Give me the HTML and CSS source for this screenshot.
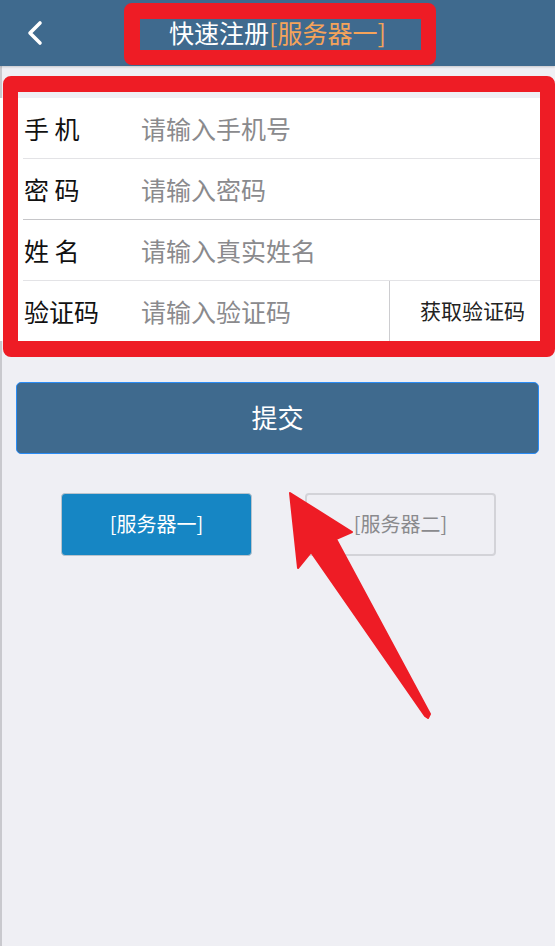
FILE: index.html
```html
<!DOCTYPE html>
<html lang="zh-CN">
<head>
<meta charset="utf-8">
<title>快速注册</title>
<link rel="stylesheet" href="styles.css">
</head>
<body>
<div class="page">
  <header class="topbar">
    <a class="back" href="#" aria-label="返回">
      <svg width="20" height="28" viewBox="0 0 20 28"><polyline points="15,4 5,14 15,24" fill="none" stroke="#fff" stroke-width="3.6" stroke-linecap="round" stroke-linejoin="round"/></svg>
    </a>
    <h1 class="title">快速注册<span class="server">[服务器一]</span></h1>
    <span class="spacer"></span>
  </header>

  <form class="form">
    <div class="row row-light">
      <label class="label">手 机</label>
      <input class="field" type="text" placeholder="请输入手机号">
    </div>
    <div class="row row-dark">
      <label class="label">密 码</label>
      <input class="field" type="password" placeholder="请输入密码">
    </div>
    <div class="row row-light">
      <label class="label">姓 名</label>
      <input class="field" type="text" placeholder="请输入真实姓名">
    </div>
    <div class="row row-last">
      <label class="label">验证码</label>
      <input class="field" type="text" placeholder="请输入验证码">
      <button type="button" class="code-btn">获取验证码</button>
    </div>
  </form>

  <button type="button" class="submit">提交</button>

  <div class="servers">
    <button type="button" class="srv srv-active">[服务器一]</button>
    <button type="button" class="srv srv-idle">[服务器二]</button>
  </div>

  <div class="mark mark-title"></div>
  <div class="mark mark-form"></div>
  <svg class="arrow" width="555" height="946" viewBox="0 0 555 946">
    <polygon points="290,493 352,532 336,539 430,714 428,718 425,716 311,552 298,568" fill="#ee1c25" stroke="#ee1c25" stroke-width="2" stroke-linejoin="round"/>
  </svg>
</div>
</body>
</html>
```
FILE: styles.css
```css
* { box-sizing: border-box; }
html, body { margin: 0; padding: 0; }
body {
  background: #efeff4;
  font-family: "Noto Sans CJK SC", "Noto Sans", sans-serif;
}
.page {
  position: relative;
  width: 555px;
  min-height: 946px;
  overflow: hidden;
  box-shadow: inset 2px 0 0 #c9c9ce;
}
.topbar {
  height: 66px;
  background: #3f6a8e;
  display: grid;
  grid-template-columns: 1fr auto 1fr;
  align-items: center;
  box-shadow: 0 1px 2px rgba(0,0,0,0.18);
}
.back {
  display: flex;
  align-items: center;
  padding-left: 25px;
  height: 66px;
}
.title {
  margin: 0;
  font-size: 25px;
  font-weight: normal;
  color: #fff;
  line-height: 1;
  padding-bottom: 2px;
}
.server { color: #f5a35a; }

.form {
  margin-top: 32px;
  background: #fff;
}
.row {
  margin-left: 23px;
  height: 61px;
  display: flex;
  align-items: center;
  border-bottom: 1px solid #e3e3e6;
}
.row-dark { border-bottom-color: #c6c6c9; }
.row-last { border-bottom: none; height: 60px; align-items: stretch; }
.label {
  width: 118px;
  flex: none;
  font-size: 25px;
  color: #111;
  padding-left: 1px;
  display: flex;
  align-items: center;
}
.field {
  flex: 1;
  min-width: 0;
  border: none;
  outline: none;
  background: transparent;
  font-family: inherit;
  font-size: 25px;
  color: #333;
  padding: 0;
}
.field::placeholder { color: #8a8a8d; }
.code-btn {
  width: 166px;
  flex: none;
  border: none;
  border-left: 1px solid #cdcdd0;
  background: #fff;
  font-family: inherit;
  font-size: 21px;
  color: #222;
  padding: 0 0 2px;
}

.submit {
  display: block;
  margin: 41px 16px 0;
  width: 523px;
  height: 72px;
  background: #3f6a8e;
  border: 1px solid #2a8cf5;
  border-radius: 5px;
  color: #fff;
  font-family: inherit;
  font-size: 26px;
  padding: 0 0 4px;
}

.servers {
  margin-top: 39px;
  display: flex;
  justify-content: center;
  gap: 53px;
  padding-left: 2px;
}
.srv {
  width: 191px;
  height: 63px;
  border-radius: 4px;
  font-family: inherit;
  font-size: 20px;
  padding: 0 0 2px;
}
.srv-active {
  background: #1686c4;
  border: 1px solid #b9c3cc;
  color: #fff;
}
.srv-idle {
  background: transparent;
  border: 2px solid #d3d3d8;
  color: #8a8a8d;
}

.mark {
  position: absolute;
  border: 16px solid #ee1c25;
  border-radius: 8px;
  pointer-events: none;
}
.mark-title {
  left: 124px;
  top: 3px;
  width: 312px;
  height: 62px;
  border-bottom-width: 15px;
  border-right-width: 15px;
}
.mark-form {
  left: 3px;
  top: 76px;
  width: 552px;
  height: 281px;
  border-left-width: 15px;
  border-right-width: 15px;
}
.arrow {
  position: absolute;
  left: 0;
  top: 0;
  pointer-events: none;
}
```
